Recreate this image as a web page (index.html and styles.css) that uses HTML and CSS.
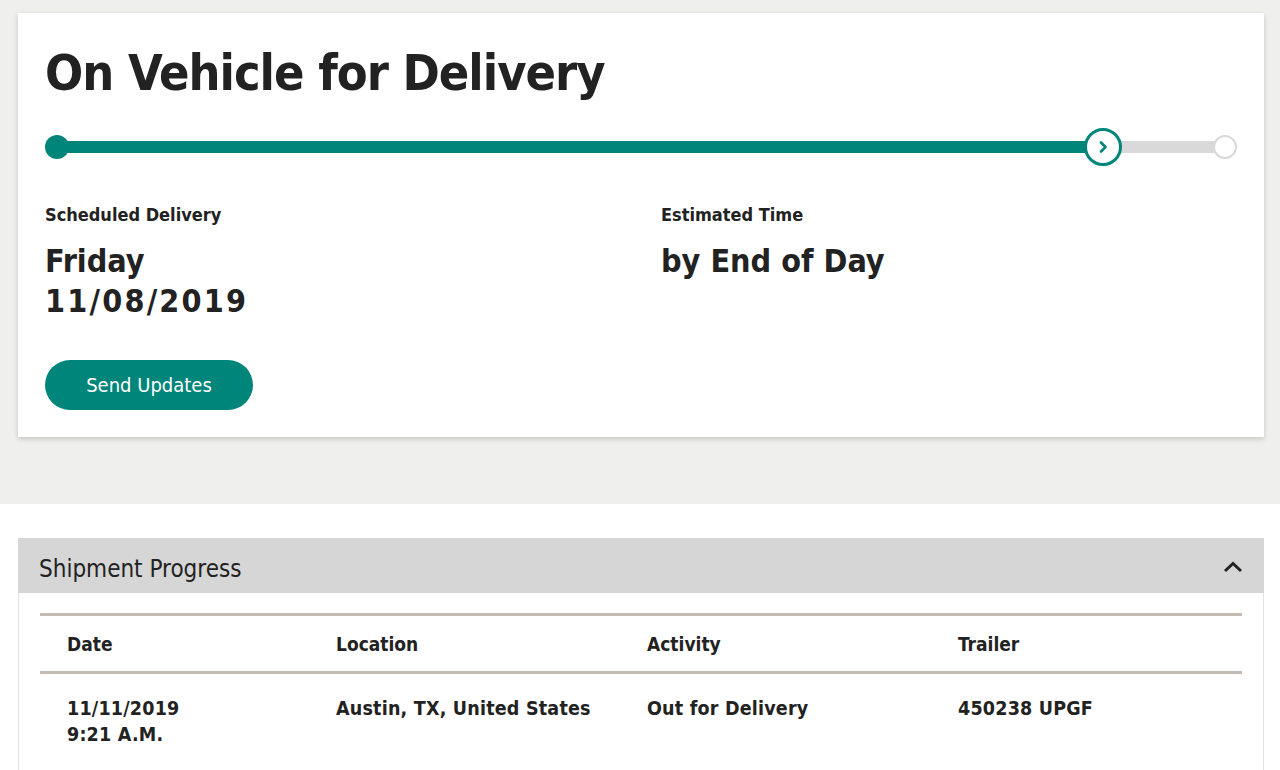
FILE: index.html
```html
<!DOCTYPE html>
<html lang="en">
<head>
<meta charset="utf-8">
<title>Shipment Tracking</title>
<link rel="stylesheet" href="styles.css">
</head>
<body>
<section class="top">
  <div class="card">
    <h1 class="title">On Vehicle for Delivery</h1>
    <div class="track">
      <span class="dot-start"></span>
      <span class="bar-done"></span>
      <span class="dot-current">
        <svg width="16" height="16" viewBox="0 0 16 16"><path d="M6 3.5 L10.5 8 L6 12.5" fill="none" stroke="#00857a" stroke-width="2.6" stroke-linecap="round" stroke-linejoin="round"/></svg>
      </span>
      <span class="bar-todo"></span>
      <span class="dot-end"></span>
    </div>
    <div class="info">
      <div class="info-col">
        <div class="label">Scheduled Delivery</div>
        <div class="value">Friday<br><span class="num">11/08/2019</span></div>
      </div>
      <div class="info-col">
        <div class="label">Estimated Time</div>
        <div class="value">by End of Day</div>
      </div>
    </div>
    <button class="btn" type="button">Send Updates</button>
  </div>
</section>
<section class="lower">
  <div class="panel">
    <div class="panel-head">
      <span class="panel-title">Shipment Progress</span>
      <svg class="chev" width="20" height="12" viewBox="0 0 20 12"><path d="M2 10 L10 2.5 L18 10" fill="none" stroke="#222" stroke-width="3" stroke-linejoin="miter"/></svg>
    </div>
    <div class="panel-body">
      <div class="table">
        <div class="row head">
          <div class="cell">Date</div>
          <div class="cell">Location</div>
          <div class="cell">Activity</div>
          <div class="cell">Trailer</div>
        </div>
        <div class="row data">
          <div class="cell">11/11/2019<br>9:21 A.M.</div>
          <div class="cell">Austin, TX, United States</div>
          <div class="cell">Out for Delivery</div>
          <div class="cell">450238 UPGF</div>
        </div>
      </div>
    </div>
  </div>
</section>
</body>
</html>
```
FILE: styles.css
```css
* { box-sizing: border-box; }
html, body { margin: 0; padding: 0; }
body {
  font-family: "DejaVu Sans", sans-serif;
  font-stretch: condensed;
  color: #222;
  background: #fff;
  height: 770px;
  overflow: hidden;
}
.top {
  background: #efefee;
  padding: 13px 16px 67px 18px;
}
.card {
  background: #fff;
  box-shadow: 0 2px 5px rgba(0,0,0,0.18);
  padding: 31px 27px 27px 27px;
  height: 424px;
}
.title {
  margin: 0;
  font-size: 50px;
  line-height: 58px;
  font-weight: bold;
  letter-spacing: -1px;
}
.track {
  display: flex;
  align-items: center;
  margin-top: 25px;
  height: 40px;
}
.dot-start {
  width: 24px; height: 24px; border-radius: 50%;
  background: #00857a; flex: none;
}
.bar-done {
  flex: 1; height: 12px; background: #00857a; margin-left: -12px;
}
.dot-current {
  width: 38px; height: 38px; border-radius: 50%;
  border: 3.5px solid #00857a; background: #fff;
  margin-left: -6px; flex: none;
  display: flex; align-items: center; justify-content: center;
  position: relative; z-index: 1;
}
.bar-todo {
  width: 105px; height: 12px; background: #d9d9d9; margin-left: -2px; flex: none;
}
.dot-end {
  width: 24px; height: 24px; border-radius: 50%;
  border: 2px solid #d9d9d9; background: #fff; margin-left: -12px; flex: none;
}
.info {
  display: grid;
  grid-template-columns: 1fr 1fr;
  column-gap: 40px;
  margin-top: 36px;
}
.label {
  font-size: 18px;
  font-weight: bold;
  line-height: 24px;
}
.value {
  font-size: 32px;
  font-weight: bold;
  line-height: 40px;
  margin-top: 14px;
}
.num { letter-spacing: 2.2px; }
.btn {
  margin-top: 39px;
  width: 208px;
  height: 50px;
  border: none;
  border-radius: 25px;
  background: #00857a;
  color: #fff;
  font-family: "DejaVu Sans", sans-serif;
  font-stretch: condensed;
  font-size: 20px;
  padding: 0;
}
.lower {
  padding: 34px 16px 0 18px;
}
.panel {
  border-left: 1px solid #e2e2e2;
  border-right: 1px solid #e2e2e2;
  height: 240px;
}
.panel-head {
  background: #d6d6d6;
  height: 55px;
  display: flex;
  align-items: center;
  justify-content: space-between;
  padding: 6px 21px 0 21px;
  margin: 0 -1px;
}
.panel-title {
  font-size: 24px;
}
.chev { margin-top: -4px; }
.panel-body {
  padding: 20px 21px 0 21px;
}
.table {
  border-top: 3px solid #c4bcb2;
}
.row {
  display: grid;
  grid-template-columns: 269px 311px 311px 1fr;
  font-size: 19px;
  font-weight: bold;
}
.row.head {
  height: 58px;
  align-items: center;
  border-bottom: 3px solid #c4bcb2;
}
.row .cell { padding-left: 27px; line-height: 26px; }
.row.data { padding-top: 22px; font-size: 19.5px; letter-spacing: 0.2px; }
```
